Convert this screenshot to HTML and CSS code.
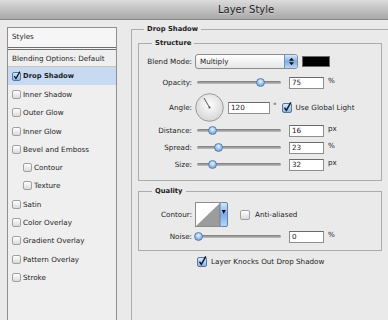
FILE: index.html
```html
<!DOCTYPE html>
<html lang="en">
<head>
  <meta charset="UTF-8">
  <title>Layer Style</title>
  <link rel="stylesheet" href="styles.css">
</head>
<body>
  <div class="titlebar">Layer Style</div>
  <div class="dialog">
    <div class="styles-panel">
      <div class="styles-head">Styles</div>
      <div class="style-row blending">Blending Options: Default</div>
      <div class="style-row selected">
        <span class="check on"><svg viewBox="0 0 10 10"><path d="M1.8 4.6 L4.2 8 L9.8 -2"/></svg></span>Drop Shadow
      </div>
      <div class="style-row"><span class="check"></span>Inner Shadow</div>
      <div class="style-row"><span class="check"></span>Outer Glow</div>
      <div class="style-row"><span class="check"></span>Inner Glow</div>
      <div class="style-row"><span class="check"></span>Bevel and Emboss</div>
      <div class="style-row sub"><span class="check"></span>Contour</div>
      <div class="style-row sub"><span class="check"></span>Texture</div>
      <div class="style-row"><span class="check"></span>Satin</div>
      <div class="style-row"><span class="check"></span>Color Overlay</div>
      <div class="style-row"><span class="check"></span>Gradient Overlay</div>
      <div class="style-row"><span class="check"></span>Pattern Overlay</div>
      <div class="style-row"><span class="check"></span>Stroke</div>
    </div>

    <div class="settings">
      <fieldset class="group outer">
        <legend>Drop Shadow</legend>

        <fieldset class="group inner structure">
          <legend>Structure</legend>
          <div class="row r-blend">
            <span class="label">Blend Mode:</span>
            <div class="popup">
              <span class="popup-text">Multiply</span>
              <span class="popup-btn">
                <svg width="7" height="9" viewBox="0 0 7 9"><path d="M1 3.8 L3.5 0.8 L6 3.8 Z M1 5.2 L3.5 8.2 L6 5.2 Z"/></svg>
              </span>
            </div>
            <span class="swatch"></span>
          </div>
          <div class="row r-opacity">
            <span class="label">Opacity:</span>
            <div class="slider"><span class="thumb" style="left: 58.5px"></span></div>
            <span class="field">75</span><span class="unit">%</span>
          </div>
          <div class="row r-angle">
            <span class="label">Angle:</span>
            <svg class="dial" width="29" height="29" viewBox="0 0 29 29">
              <defs>
                <radialGradient id="dialFill" cx="50%" cy="40%" r="60%">
                  <stop offset="0" stop-color="#fdfdfd"/>
                  <stop offset="1" stop-color="#d6d6d6"/>
                </radialGradient>
              </defs>
              <circle cx="14.5" cy="14.5" r="13.8" fill="url(#dialFill)" stroke="#9a9a9a" stroke-width="1"/>
              <line x1="14.5" y1="14.5" x2="9" y2="5" stroke="#444" stroke-width="0.9"/>
              <circle cx="14.5" cy="14.5" r="1" fill="#444"/>
            </svg>
            <span class="field field-angle">120</span><span class="unit deg">°</span>
            <span class="check big on"><svg viewBox="0 0 10 10"><path d="M1.8 4.6 L4.2 8 L9.8 -2"/></svg></span>
            <span class="check-text">Use Global Light</span>
          </div>
          <div class="row r-distance">
            <span class="label">Distance:</span>
            <div class="slider"><span class="thumb" style="left: 10.5px"></span></div>
            <span class="field">16</span><span class="unit">px</span>
          </div>
          <div class="row">
            <span class="label">Spread:</span>
            <div class="slider"><span class="thumb" style="left: 16.5px"></span></div>
            <span class="field">23</span><span class="unit">%</span>
          </div>
          <div class="row">
            <span class="label">Size:</span>
            <div class="slider"><span class="thumb" style="left: 10.5px"></span></div>
            <span class="field">32</span><span class="unit">px</span>
          </div>
        </fieldset>

        <fieldset class="group inner quality">
          <legend>Quality</legend>
          <div class="row r-contour">
            <span class="label">Contour:</span>
            <svg class="contour" width="33" height="25" viewBox="0 0 33 25">
              <defs>
                <linearGradient id="aqua" x1="0" y1="0" x2="0" y2="1">
                  <stop offset="0" stop-color="#d7e8fb"/>
                  <stop offset="0.5" stop-color="#7eaee6"/>
                  <stop offset="1" stop-color="#b9d6f6"/>
                </linearGradient>
              </defs>
              <rect x="0.5" y="0.5" width="25" height="24" fill="#fff" stroke="#8c8c8c"/>
              <polygon points="1,24 25,1 25,24" fill="#9c9c9c"/>
              <rect x="25" y="0.5" width="7.5" height="24" rx="1.5" fill="url(#aqua)" stroke="#5f82b2"/>
              <polygon points="26.7,8 30.8,8 28.75,12" fill="#111"/>
            </svg>
            <span class="check big"></span>
            <span class="check-text aa">Anti-aliased</span>
          </div>
          <div class="row r-noise">
            <span class="label">Noise:</span>
            <div class="slider noise"><span class="thumb" style="left: -2.5px"></span></div>
            <span class="field">0</span><span class="unit">%</span>
          </div>
        </fieldset>

        <div class="row r-knocks">
          <span class="check big on"><svg viewBox="0 0 10 10"><path d="M1.8 4.6 L4.2 8 L9.8 -2"/></svg></span>
          <span class="check-text">Layer Knocks Out Drop Shadow</span>
        </div>
      </fieldset>
    </div>
  </div>
</body>
</html>
```

FILE: styles.css
```css
* {
  box-sizing: border-box;
}
html, body {
  margin: 0;
  overflow: hidden;
}
body {
  width: 388px;
  height: 320px;
  background-color: #eaeaea;
  font-family: 'DejaVu Sans', 'Liberation Sans', sans-serif;
  font-size: 7.2px;
  color: #1c1c1c;
}
.titlebar {
  height: 20px;
  padding-left: 218px;
  line-height: 19px;
  font-size: 10px;
  color: #222;
  background: linear-gradient(#dcdcdc, #bcbcbc 60%, #aaaaaa);
  border-bottom: 1px solid #868686;
  text-shadow: 0 1px 0 rgba(255,255,255,0.35);
}
.dialog {
  display: flex;
  align-items: flex-start;
}

/* left list of styles */
.styles-panel {
  flex: none;
  width: 110px;
  height: 293px;
  margin: 7px 0 0 7px;
  border: 1px solid #8f8f8f;
  border-bottom: 0;
  background-color: #efefef;
}
.styles-head {
  height: 22px;
  padding: 0 0 2px 4px;
  line-height: 17px;
  background-color: #f6f6f6;
  border-bottom: 3px double #6f6f6f;
}
.style-row {
  display: flex;
  align-items: center;
  gap: 2px;
  height: 18.3px;
  padding-left: 4px;
}
.style-row.blending {
  height: 17px;
  border-bottom: 1px solid #c6c6c6;
}
.style-row.selected {
  background-color: #c8daf1;
  font-weight: bold;
  font-size: 6.8px;
}
.style-row.sub {
  padding-left: 15px;
}

/* checkboxes */
.check {
  flex: none;
  display: inline-block;
  width: 9px;
  height: 9px;
  border: 1px solid #a0a0a0;
  border-radius: 2px;
  background: linear-gradient(#ffffff, #dadada);
}
.check.big {
  width: 10px;
  height: 10px;
}
.check.on {
  border-color: #56769f;
  background: linear-gradient(#dde9f8, #8db5e6);
}
.check svg {
  display: block;
  width: 100%;
  height: 100%;
  overflow: visible;
}
.check path {
  fill: none;
  stroke: #0f1a33;
  stroke-width: 1.9;
}
.check-text {
  margin-left: 4px;
}

/* right settings */
.settings {
  flex: none;
  margin: 4px 0 0 14px;
}
.group {
  margin: 0;
  padding: 0;
  min-width: 0;
  border: 1px solid #acacac;
}
.group legend {
  padding: 0 3px;
  margin-left: 12px;
  font-weight: bold;
  font-size: 6.8px;
  line-height: 10px;
}
.group.outer {
  width: 257px;
  height: 296px;
  border-right: 0;
  border-bottom: 0;
}
.group.inner {
  width: 244px;
  margin: 4px 0 0 6px;
  padding: 0 0 7px;
}
.group.inner legend {
  margin-left: 13px;
}
.group.quality {
  margin-top: 5px;
  padding-bottom: 5px;
}

.row {
  display: flex;
  align-items: center;
  height: 17px;
}
.r-blend {
  margin-top: 5px;
}
.r-opacity {
  margin-top: 4px;
}
.r-angle {
  margin-top: 8px;
}
.r-distance {
  margin-top: 6px;
}
.r-contour {
  margin-top: 10px;
}
.r-noise {
  margin-top: 5px;
}
.r-knocks {
  margin: 2px 0 0 65px;
}
.label {
  flex: none;
  width: 53px;
  margin-right: 3px;
  text-align: right;
}

/* popup menu */
.popup {
  display: flex;
  width: 103px;
  height: 15px;
  border: 1px solid #8c8c8c;
  border-radius: 3px;
  background: linear-gradient(#ffffff, #e6e6e6);
  overflow: hidden;
}
.popup-text {
  flex: 1;
  padding-left: 4px;
  line-height: 13px;
}
.popup-btn {
  display: flex;
  align-items: center;
  justify-content: center;
  width: 13px;
  border-left: 1px solid #6f8fbd;
  background: linear-gradient(#d7e8fb, #7eaee6 50%, #b9d6f6);
}
.popup-btn path {
  fill: #111;
}
.swatch {
  width: 28px;
  height: 11px;
  margin-left: 4px;
  background-color: #000;
  border: 1px solid #6a6a6a;
}

/* sliders */
.slider {
  position: relative;
  flex: none;
  width: 84px;
  height: 3px;
  margin-left: 2px;
  border-radius: 2px;
  background: linear-gradient(#7a7a7a, #c2c2c2);
}
.slider.noise {
  width: 85px;
  margin-left: 1px;
}
.thumb {
  position: absolute;
  top: -3px;
  width: 9px;
  height: 9px;
  border: 1px solid #5b7fae;
  border-radius: 50%;
  background: radial-gradient(circle at 50% 35%, #e8f2fc, #83b3e8 65%, #5a8dcc);
}

/* number fields */
.field {
  flex: none;
  width: 35px;
  height: 12px;
  margin-left: 8px;
  padding-left: 2px;
  border: 1px solid #8e8e8e;
  border-top-color: #6a6a6a;
  background-color: #fff;
  line-height: 10px;
}
.field-angle {
  width: 42px;
  margin-left: 4px;
}
.unit {
  align-self: flex-start;
  margin: 2px 0 0 4px;
  line-height: 9px;
}
.unit.deg {
  margin-left: 3px;
  margin-right: 5px;
}

.dial {
  flex: none;
}
.contour {
  flex: none;
}
.r-contour .check {
  margin-left: 12px;
}
.check-text.aa {
  margin-left: 5px;
}
```
